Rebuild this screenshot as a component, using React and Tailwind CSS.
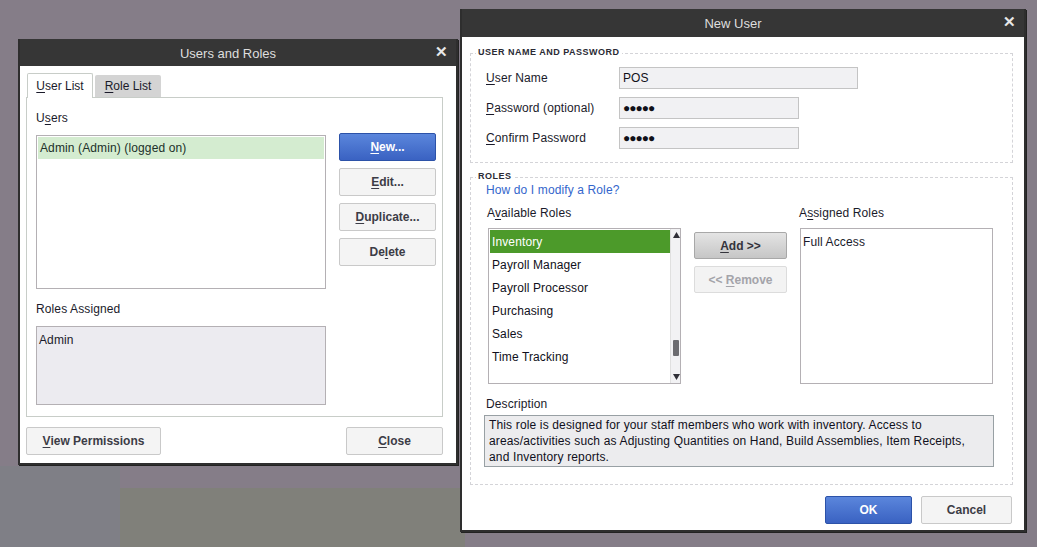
import React from "react";

const font = { fontFamily: '"Liberation Sans", Arial, sans-serif' };

const U = ({ children }) => <span className="underline underline-offset-2">{children}</span>;

const GrayButton = ({ children, className = "" }) => (
  <button
    className={`h-[28px] rounded-[2px] border border-[#c9c9c9] bg-[#f4f4f4] text-[12px] font-bold text-[#3c3c46] ${className}`}
  >
    {children}
  </button>
);

const BlueButton = ({ children, className = "" }) => (
  <button
    className={`h-[28px] rounded-[2px] border border-[#2c52a8] bg-gradient-to-b from-[#5b86dc] to-[#3a62c2] text-[12px] font-bold text-white ${className}`}
  >
    {children}
  </button>
);

const TitleBar = ({ title, h }) => (
  <div className={`relative flex items-center justify-center bg-[#363636] pr-[20px] pt-[2px] text-[13px] text-[#dedede] ${h}`}>
    {title}
    <span className="absolute right-[8px] top-[5px] text-[15px] font-bold leading-none text-[#e8e8e8]">✕</span>
  </div>
);

const UsersAndRoles = () => (
  <div className="absolute left-[18px] top-[39px] w-[440px] border-2 border-t-0 border-[#2e2e2e] bg-[#2e2e2e] shadow-[1px_1px_0_#222]">
    <TitleBar title="Users and Roles" h="h-[27px]" />
    <div className="h-[397px] bg-white pl-[6px] pr-[13px] pt-[7px]">
      <div className="flex items-end pl-[1px]">
        <div className="relative z-10 -mb-px flex h-[25px] w-[66px] items-center justify-center rounded-t-[2px] border border-b-0 border-[#c8cdc8] bg-white text-[12px] text-[#1a1a2a]">
          <U>U</U>ser List
        </div>
        <div className="ml-[2px] flex h-[22px] w-[66px] items-center justify-center rounded-t-[2px] bg-[#d4d4d4] text-[12px] text-[#1a1a2a]">
          <U>R</U>ole List
        </div>
      </div>
      <div className="h-[320px] border border-[#c8cdc8] pl-[9px] pt-[13px] text-[12px] tracking-[0.12px] text-[#1a1a2a]">
        <div className="leading-[14px]">
          U<U>s</U>ers
        </div>
        <div className="mt-[10px] flex">
          <div className="h-[154px] w-[290px] border border-[#b4b0b4] bg-white p-px">
            <div className="flex h-[22px] items-center bg-[#d4ecd0] pl-[2px] text-[#20302a]">Admin (Admin) (logged on)</div>
          </div>
          <div className="-mt-[2px] ml-[13px] flex flex-col gap-[7px] tracking-normal">
            <BlueButton className="w-[97px]">
              <U>N</U>ew...
            </BlueButton>
            <GrayButton className="w-[97px]">
              <U>E</U>dit...
            </GrayButton>
            <GrayButton className="w-[97px]">
              <U>D</U>uplicate...
            </GrayButton>
            <GrayButton className="w-[97px]">
              De<U>l</U>ete
            </GrayButton>
          </div>
        </div>
        <div className="mt-[13px] leading-[14px]">Roles Assigned</div>
        <div className="mt-[10px] h-[79px] w-[290px] border border-[#b4b0b4] bg-[#ecebf0] px-[2px] pt-[4px]">Admin</div>
      </div>
      <div className="mt-[10px] flex justify-between">
        <GrayButton className="w-[135px]">
          <U>V</U>iew Permissions
        </GrayButton>
        <GrayButton className="w-[97px]">
          <U>C</U>lose
        </GrayButton>
      </div>
    </div>
  </div>
);

const GroupBox = ({ legend, className = "", children }) => (
  <div className={`relative border border-dashed border-[#d4d4d8] ${className}`}>
    <span className="absolute -top-[8px] left-[5px] bg-white px-[2px] text-[9px] font-bold leading-[12px] tracking-[0.5px] text-[#2a2a34]">
      {legend}
    </span>
    {children}
  </div>
);

const Field = ({ label, value, width, dots }) => (
  <div className="flex h-[22px] items-center">
    <div className="w-[133px] text-[12px] text-[#1a1a2a]">{label}</div>
    <div
      className={`flex h-[22px] items-center border border-[#c4c4c4] bg-[#f1f1f3] pl-[3px] text-[12px] text-[#101018] ${width}`}
    >
      {dots ? <span className="text-[12px] tracking-[-1px]">●●●●●</span> : value}
    </div>
  </div>
);

const roles = ["Inventory", "Payroll Manager", "Payroll Processor", "Purchasing", "Sales", "Time Tracking"];

const NewUser = () => (
  <div className="absolute left-[460px] top-[9px] w-[566px] border-2 border-t-0 border-[#2e2e2e] bg-[#2e2e2e] shadow-[1px_1px_0_#222]">
    <TitleBar title="New User" h="h-[28px]" />
    <div className="h-[493px] bg-white px-[8px] pt-[16px] text-[12px] tracking-[0.12px] text-[#1a1a2a]">
      <GroupBox legend="USER NAME AND PASSWORD" className="h-[110px] w-[543px] pl-[15px] pt-[13px]">
        <div className="flex flex-col gap-[8px]">
          <Field label={<><U>U</U>ser Name</>} value="POS" width="w-[239px]" />
          <Field label={<><U>P</U>assword (optional)</>} dots width="w-[180px]" />
          <Field label={<><U>C</U>onfirm Password</>} dots width="w-[180px]" />
        </div>
      </GroupBox>
      <GroupBox legend="ROLES" className="mt-[14px] h-[308px] w-[543px] pt-[5px]">
        <div className="pl-[15px] leading-[14px] text-[#3366cc]">How do I modify a Role?</div>
        <div className="mt-[9px] flex pl-[16px] leading-[14px]">
          <div className="w-[312px]">
            A<U>v</U>ailable Roles
          </div>
          <div>
            A<U>s</U>signed Roles
          </div>
        </div>
        <div className="mt-[8px] flex pl-[17px]">
          <div className="flex h-[156px] w-[193px] border border-[#b4b0b4] bg-white">
            <div className="flex-1 pt-px pl-px">
              {roles.map((r, i) => (
                <div
                  key={r}
                  className={`flex h-[23px] items-center pl-[2px] ${i === 0 ? "bg-[#4c9a2a] text-white" : "text-[#101020]"}`}
                >
                  {r}
                </div>
              ))}
            </div>
            <div className="relative w-[10px] border-l border-[#e0e0e0] bg-[#f2f2f4]">
              <svg className="absolute left-[2px] top-[3px]" width="7" height="6" viewBox="0 0 7 6">
                <path d="M3.5 0L7 6H0z" fill="#303038" />
              </svg>
              <div className="absolute left-[2px] top-[111px] h-[16px] w-[6px] rounded-[1px] bg-[#6c6c70]" />
              <svg className="absolute bottom-[3px] left-[2px]" width="7" height="6" viewBox="0 0 7 6">
                <path d="M0 0H7L3.5 6z" fill="#303038" />
              </svg>
            </div>
          </div>
          <div className="ml-[13px] mt-[4px] flex flex-col gap-[7px] tracking-normal">
            <button className="h-[27px] w-[93px] rounded-[2px] border border-[#a8a8a8] bg-gradient-to-b from-[#e4e4e4] to-[#c6c6c6] text-[12px] font-bold text-[#34343c]">
              <U>A</U>dd &gt;&gt;
            </button>
            <button className="h-[27px] w-[93px] rounded-[2px] border border-[#dcdcdc] bg-[#f3f3f3] text-[12px] font-bold text-[#a4a4aa]">
              &lt;&lt; <U>R</U>emove
            </button>
          </div>
          <div className="ml-[13px] h-[156px] w-[193px] border border-[#b4b0b4] bg-white pl-[2px] pt-[4px]">Full Access</div>
        </div>
        <div className="mt-[13px] pl-[15px] leading-[14px]">Description</div>
        <div className="ml-[13px] mt-[4px] h-[52px] w-[510px] border border-[#98a0a4] bg-[#ececee] px-[4px] pt-[1px] text-[12px] leading-[16px] tracking-[0.15px] text-[#101020]">
          This role is designed for your staff members who work with inventory. Access to
          <br />
          areas/activities such as Adjusting Quantities on Hand, Build Assemblies, Item Receipts,
          <br />
          and Inventory reports.
        </div>
      </GroupBox>
      <div className="mt-[11px] flex justify-end gap-[9px] pr-[4px] tracking-normal">
        <BlueButton className="w-[87px]">OK</BlueButton>
        <GrayButton className="w-[91px]">Cancel</GrayButton>
      </div>
    </div>
  </div>
);

export default function App() {
  return (
    <div className="relative h-[547px] w-[1037px] overflow-hidden bg-[#857d88]" style={font}>
      <div className="absolute bottom-0 left-0 h-[81px] w-[120px] bg-[#7f7f86]" />
      <div className="absolute bottom-0 left-[120px] h-[59px] w-[345px] bg-[#80807a]" />
      <UsersAndRoles />
      <NewUser />
    </div>
  );
}
